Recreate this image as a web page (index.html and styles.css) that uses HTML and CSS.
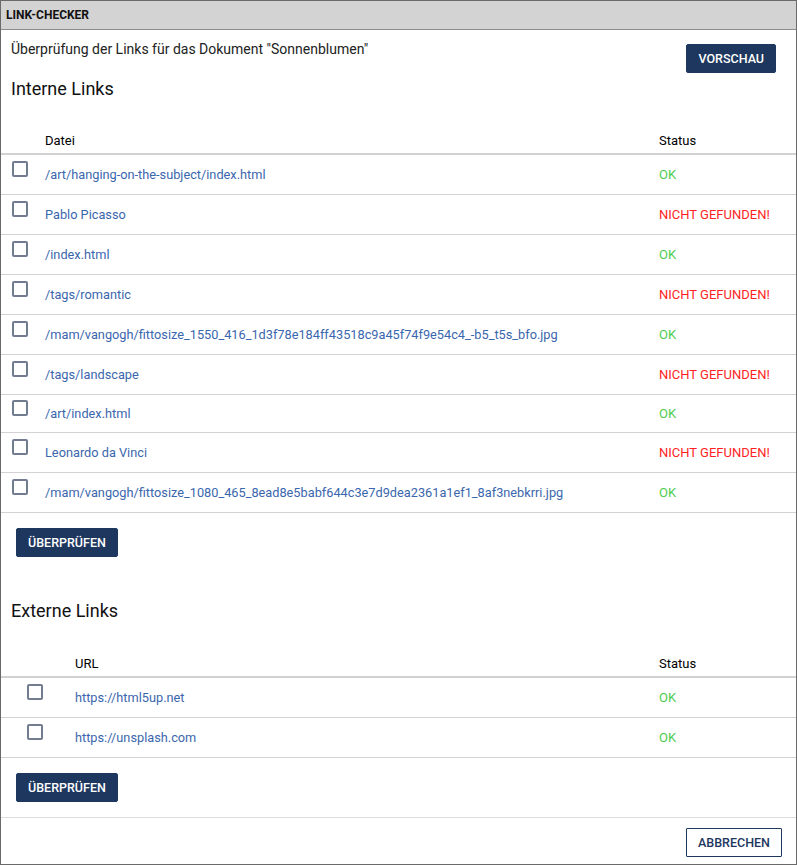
FILE: index.html
```html
<!DOCTYPE html>
<html>
  <head>
    <title>Link-Checker</title>
    <link rel="stylesheet" href="styles.css">
  </head>
  <body>
    <div class="dialog">
      <div class="dialog-title">LINK-CHECKER</div>

      <div class="intro">
        <div>
          <p class="intro-text">Überprüfung der Links für das Dokument "Sonnenblumen"</p>
          <h2>Interne Links</h2>
        </div>
        <button class="btn btn-primary btn-preview">VORSCHAU</button>
      </div>

      <table class="links internal">
        <thead>
          <tr>
            <th class="col-check"></th>
            <th>Datei</th>
            <th class="col-status">Status</th>
          </tr>
        </thead>
        <tbody>
          <tr>
            <td class="col-check"><span class="checkbox"></span></td>
            <td><a href="#">/art/hanging-on-the-subject/index.html</a></td>
            <td class="col-status ok">OK</td>
          </tr>
          <tr>
            <td class="col-check"><span class="checkbox"></span></td>
            <td><a href="#">Pablo Picasso</a></td>
            <td class="col-status missing">NICHT GEFUNDEN!</td>
          </tr>
          <tr>
            <td class="col-check"><span class="checkbox"></span></td>
            <td><a href="#">/index.html</a></td>
            <td class="col-status ok">OK</td>
          </tr>
          <tr>
            <td class="col-check"><span class="checkbox"></span></td>
            <td><a href="#">/tags/romantic</a></td>
            <td class="col-status missing">NICHT GEFUNDEN!</td>
          </tr>
          <tr>
            <td class="col-check"><span class="checkbox"></span></td>
            <td><a href="#">/mam/vangogh/fittosize_1550_416_1d3f78e184ff43518c9a45f74f9e54c4_-b5_t5s_bfo.jpg</a></td>
            <td class="col-status ok">OK</td>
          </tr>
          <tr>
            <td class="col-check"><span class="checkbox"></span></td>
            <td><a href="#">/tags/landscape</a></td>
            <td class="col-status missing">NICHT GEFUNDEN!</td>
          </tr>
          <tr class="compact">
            <td class="col-check"><span class="checkbox"></span></td>
            <td><a href="#">/art/index.html</a></td>
            <td class="col-status ok">OK</td>
          </tr>
          <tr>
            <td class="col-check"><span class="checkbox"></span></td>
            <td><a href="#">Leonardo da Vinci</a></td>
            <td class="col-status missing">NICHT GEFUNDEN!</td>
          </tr>
          <tr>
            <td class="col-check"><span class="checkbox"></span></td>
            <td><a href="#">/mam/vangogh/fittosize_1080_465_8ead8e5babf644c3e7d9dea2361a1ef1_8af3nebkrri.jpg</a></td>
            <td class="col-status ok">OK</td>
          </tr>
        </tbody>
      </table>
      <div class="actions">
        <button class="btn btn-primary">ÜBERPRÜFEN</button>
      </div>

      <h2 class="section-title">Externe Links</h2>
      <table class="links external">
        <thead>
          <tr>
            <th class="col-check"></th>
            <th>URL</th>
            <th class="col-status">Status</th>
          </tr>
        </thead>
        <tbody>
          <tr>
            <td class="col-check"><span class="checkbox"></span></td>
            <td><a href="#">https://html5up.net</a></td>
            <td class="col-status ok">OK</td>
          </tr>
          <tr>
            <td class="col-check"><span class="checkbox"></span></td>
            <td><a href="#">https://unsplash.com</a></td>
            <td class="col-status ok">OK</td>
          </tr>
        </tbody>
      </table>
      <div class="actions">
        <button class="btn btn-primary">ÜBERPRÜFEN</button>
      </div>

      <div class="dialog-footer">
        <button class="btn btn-outline">ABBRECHEN</button>
      </div>
    </div>
  </body>
</html>
```

FILE: styles.css
```css
html,
body {
  margin: 0;
  background-color: #fff;
}

body {
  font-family: Roboto, "Liberation Sans", sans-serif;
  color: #222;
}

.dialog {
  box-sizing: border-box;
  height: 865px;
  border: 1px solid #6a6a6a;
  display: flex;
  flex-direction: column;
}

.dialog-title {
  height: 28px;
  line-height: 28px;
  padding-left: 5px;
  background-color: #d3d3d3;
  border-bottom: 1px solid #8c8c8c;
  font-size: 12px;
  font-weight: bold;
  color: #111;
}

.intro {
  display: flex;
  justify-content: space-between;
  align-items: flex-start;
  margin-top: 11px;
  padding: 0 20px 0 10px;
}

.intro-text {
  margin: 0;
  font-size: 14px;
  line-height: 16px;
}

h2 {
  margin: 21px 0 0;
  font-size: 18px;
  line-height: 21px;
  font-weight: normal;
  color: #111;
}

.section-title {
  margin: 43px 0 0 10px;
}

.btn {
  font-family: Roboto, "Liberation Sans", sans-serif;
  font-size: 12.5px;
  font-weight: 500;
  height: 29px;
  padding: 0 11px;
  border-radius: 2px;
  cursor: pointer;
}

.btn-primary {
  background-color: #1d375e;
  border: 1px solid #1d375e;
  color: #fff;
}

.btn-preview {
  margin-top: 3px;
}

.btn-outline {
  background-color: #fff;
  border: 1px solid #1d375e;
  color: #1d375e;
  border-radius: 1px;
}

/* Link tables */
.links {
  width: 100%;
  border-collapse: collapse;
  table-layout: fixed;
  margin-top: 27px;
}

.links.external {
  margin-top: 28px;
}

.links th {
  height: 25px;
  padding: 2px 0 0;
  text-align: left;
  font-size: 13px;
  font-weight: normal;
  color: #000;
  border-bottom: 2px solid #d2d2d2;
}

.links td {
  height: 39px;
  padding: 0;
  font-size: 13px;
  border-bottom: 1px solid #d2d2d2;
}

.links tr.compact td {
  height: 37px;
}

.links .col-check {
  width: 44px;
  padding-left: 11px;
  box-sizing: border-box;
}

.links.external .col-check {
  width: 74px;
  padding-left: 26px;
}

.links .col-status {
  width: 137px;
}

.checkbox {
  display: block;
  box-sizing: border-box;
  width: 16px;
  height: 16px;
  margin-bottom: 12px;
  border: 2px solid #717c90;
  border-radius: 2px;
  background-color: #fff;
}

.links a {
  font-size: 12.75px;
  color: #3a66ad;
  text-decoration: none;
}

.ok {
  color: #4fcd50;
}

.missing {
  color: #ff1f24;
}

.actions {
  padding: 15px 0 0 15px;
}

.dialog-footer {
  margin-top: auto;
  border-top: 1px solid #dcdcdc;
  padding: 10px 14px 7px;
  display: flex;
  justify-content: flex-end;
}
```
